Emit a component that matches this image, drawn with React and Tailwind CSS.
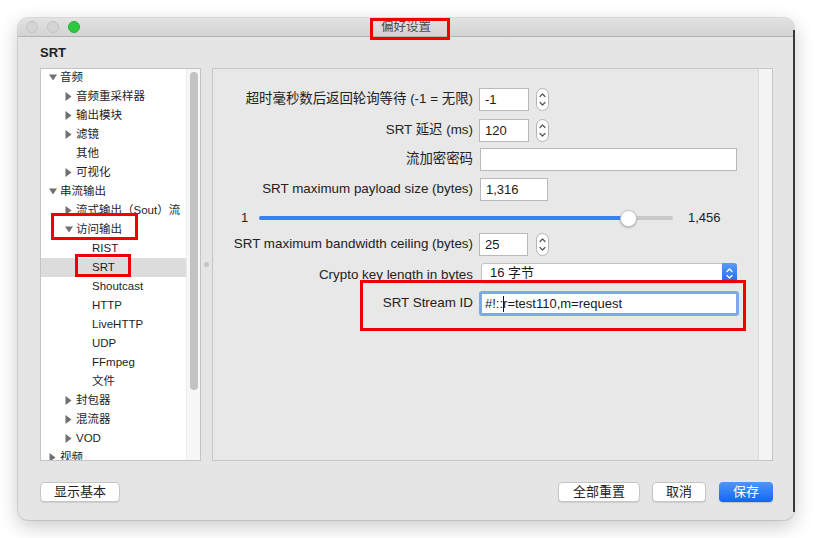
import React from "react";

const Tri = ({ dir }) =>
  dir === "down" ? (
    <svg width="8" height="7" viewBox="0 0 8 7"><path d="M0 0.5 H8 L4 6.5 Z" fill="#707070" /></svg>
  ) : (
    <svg width="7" height="9" viewBox="0 0 7 9"><path d="M0.5 0 V9 L6.5 4.5 Z" fill="#707070" /></svg>
  );

const Stepper = () => (
  <svg width="13" height="23" viewBox="0 0 13 23">
    <rect x="0.5" y="0.5" width="12" height="22" rx="6" fill="#fff" stroke="#b4b4b4" />
    <path d="M4 8.5 L6.5 6 L9 8.5" fill="none" stroke="#555" strokeWidth="1.2" strokeLinecap="round" strokeLinejoin="round" />
    <path d="M4 14.5 L6.5 17 L9 14.5" fill="none" stroke="#555" strokeWidth="1.2" strokeLinecap="round" strokeLinejoin="round" />
  </svg>
);

const tree = [
  [0, "down", "音频"],
  [1, "right", "音频重采样器"],
  [1, "right", "输出模块"],
  [1, "right", "滤镜"],
  [1, null, "其他"],
  [1, "right", "可视化"],
  [0, "down", "串流输出"],
  [1, "right", "流式输出（Sout）流"],
  [1, "down", "访问输出"],
  [2, null, "RIST"],
  [2, null, "SRT", true],
  [2, null, "Shoutcast"],
  [2, null, "HTTP"],
  [2, null, "LiveHTTP"],
  [2, null, "UDP"],
  [2, null, "FFmpeg"],
  [2, null, "文件"],
  [1, "right", "封包器"],
  [1, "right", "混流器"],
  [1, "right", "VOD"],
  [0, "right", "视频"],
];

const indent = ["pl-[8px]", "pl-[24px]", "pl-[40px]"];

const Input = ({ w, children }) => (
  <div className={`${w} h-[23px] border border-[#b9b9b9] bg-white px-[5px] flex items-center text-[13px] text-[#1a1a1a]`}>
    {children}
  </div>
);

const Label = ({ children }) => (
  <div className="w-[260px] shrink-0 text-right text-[13.4px] text-[#222] whitespace-nowrap">{children}</div>
);

export default function App() {
  return (
    <div className="w-[814px] h-[538px] bg-white relative overflow-hidden font-['Liberation_Sans','Noto_Sans_CJK_SC',sans-serif]">
      <div className="ml-[18px] mt-[18px] w-[776px] h-[502px] rounded-[10px] bg-[#e5e5e5] shadow-[0_6px_20px_rgba(0,0,0,0.22),0_0_0_1px_rgba(0,0,0,0.10)] flex flex-col overflow-hidden">
        {/* title bar */}
        <div className="h-[19px] shrink-0 grid grid-cols-[1fr_auto_1fr] items-center bg-gradient-to-b from-[#e2e2e2] to-[#d3d3d3] border-b border-[#b3b3b3]">
          <div className="flex items-center pl-[8px] gap-[9px]">
            <div className="w-[12px] h-[12px] rounded-full bg-[#d4d4d4] border border-[#c2c2c2]" />
            <div className="w-[12px] h-[12px] rounded-full bg-[#d4d4d4] border border-[#c2c2c2]" />
            <div className="w-[12px] h-[12px] rounded-full bg-[#2bc840] border border-[#25b03a]" />
          </div>
          <div className="text-[12.5px] text-[#4a4a4a]">偏好设置</div>
          <div />
        </div>

        {/* body */}
        <div className="flex-1 flex flex-col pl-[22px] pr-[21px]">
          <div className="h-[31px] flex items-center text-[13px] font-bold text-[#222]">SRT</div>

          <div className="h-[393px] flex">
            {/* left tree panel */}
            <div className="w-[161px] border border-[#c4c4c4] bg-white flex overflow-hidden">
              <div className="flex-1 overflow-hidden -mt-[1px]">
                {tree.map(([lvl, tri, text, sel], i) => (
                  <div
                    key={i}
                    className={`h-[19px] flex items-center ${indent[lvl]} ${sel ? "bg-[#dcdcdc]" : ""} text-[11.5px] text-[#1e1e1e] whitespace-nowrap`}
                  >
                    <span className="w-[11px] shrink-0 flex items-center">{tri && <Tri dir={tri} />}</span>
                    <span>{text}</span>
                  </div>
                ))}
              </div>
              <div className="w-[14px] shrink-0 bg-[#f7f7f7] border-l border-[#ececec] pt-[3px] flex justify-center">
                <div className="w-[8px] h-[318px] rounded-full bg-[#c2c2c2]" />
              </div>
            </div>

            {/* splitter */}
            <div className="w-[11px] flex items-center justify-center">
              <div className="w-[5px] h-[5px] rounded-full bg-[#c4c4c4]" />
            </div>

            {/* right panel */}
            <div className="flex-1 border border-[#c6c6c6] bg-[#e8e8e8] flex">
              <div className="flex-1 flex flex-col">
                <div className="mt-[19px] h-[23px] flex items-center">
                  <Label>超时毫秒数后返回轮询等待 (-1 = 无限)</Label>
                  <div className="ml-[6px]"><Input w="w-[50px]">-1</Input></div>
                  <div className="ml-[7px] flex"><Stepper /></div>
                </div>
                <div className="mt-[8px] h-[23px] flex items-center">
                  <Label>SRT 延迟 (ms)</Label>
                  <div className="ml-[6px]"><Input w="w-[50px]">120</Input></div>
                  <div className="ml-[7px] flex"><Stepper /></div>
                </div>
                <div className="mt-[6px] h-[23px] flex items-center">
                  <Label>流加密密码</Label>
                  <div className="ml-[7px]"><Input w="w-[257px]" /></div>
                </div>
                <div className="mt-[7px] h-[23px] flex items-center">
                  <Label>SRT maximum payload size (bytes)</Label>
                  <div className="ml-[7px]"><Input w="w-[68px]">1,316</Input></div>
                </div>
                <div className="mt-[8px] h-[18px] flex items-center pl-[28px] text-[13px] text-[#222]">
                  <span className="w-[8px]">1</span>
                  <div className="ml-[10px] w-[414px] h-[4px] rounded-full bg-[#c9c9c9] flex relative">
                    <div className="w-[369px] h-[4px] rounded-full bg-[#3a7ff5]" />
                    <div className="absolute left-[361px] -top-[6.5px] w-[17px] h-[17px] rounded-full bg-white border border-[#c4c4c4] shadow-[0_1px_2px_rgba(0,0,0,0.25)]" />
                  </div>
                  <span className="ml-[15px]">1,456</span>
                </div>
                <div className="mt-[6px] h-[23px] flex items-center">
                  <Label>SRT maximum bandwidth ceiling (bytes)</Label>
                  <div className="ml-[6px]"><Input w="w-[49px]">25</Input></div>
                  <div className="ml-[8px] flex"><Stepper /></div>
                </div>
                <div className="mt-[7px] h-[20px] flex items-center">
                  <div className="self-end leading-[16px]"><Label>Crypto key length in bytes</Label></div>
                  <div className="ml-[8px] w-[256px] h-[20px] flex bg-white border border-[#c2c2c2] rounded-[3px] shadow-[0_1px_1px_rgba(0,0,0,0.08)]">
                    <div className="flex-1 flex items-center pl-[8px] text-[13px] text-[#1a1a1a]">16 字节</div>
                    <div className="w-[15px] -my-px -mr-px rounded-r-[3px] bg-gradient-to-b from-[#5a9cf8] to-[#1a67ef] flex items-center justify-center">
                      <svg width="9" height="13" viewBox="0 0 9 13">
                        <path d="M2 4.5 L4.5 2 L7 4.5" fill="none" stroke="#fff" strokeWidth="1.3" strokeLinecap="round" strokeLinejoin="round" />
                        <path d="M2 8.5 L4.5 11 L7 8.5" fill="none" stroke="#fff" strokeWidth="1.3" strokeLinecap="round" strokeLinejoin="round" />
                      </svg>
                    </div>
                  </div>
                </div>
                <div className="mt-[8px] h-[25px] flex items-center">
                  <Label>SRT Stream ID</Label>
                  <div className="ml-[6px] w-[260px] h-[25px] rounded-[3px] border-[3px] border-[#7ea8ee] bg-white flex items-center pl-[3px] text-[13px] text-[#1a1a1a] whitespace-nowrap">
                    <span>#!::</span>
                    <span className="w-px h-[16px] bg-[#111] -mr-[1px]" />
                    <span>r=test110,m=request</span>
                  </div>
                </div>
              </div>
              <div className="w-[14px] shrink-0 bg-[#f4f4f4] border-l border-[#dcdcdc]" />
            </div>
          </div>

          {/* footer */}
          <div className="flex-1 flex items-start pt-[21px]">
            <button className="w-[80px] h-[20px] bg-white border border-[#c6c6c6] rounded-[4px] shadow-[0_1px_1px_rgba(0,0,0,0.1)] text-[13px] text-[#222] flex items-center justify-center">显示基本</button>
            <div className="flex-1" />
            <button className="w-[82px] h-[20px] bg-white border border-[#c6c6c6] rounded-[4px] shadow-[0_1px_1px_rgba(0,0,0,0.1)] text-[13px] text-[#222] flex items-center justify-center">全部重置</button>
            <button className="ml-[12px] w-[54px] h-[20px] bg-white border border-[#c6c6c6] rounded-[4px] shadow-[0_1px_1px_rgba(0,0,0,0.1)] text-[13px] text-[#222] flex items-center justify-center">取消</button>
            <button className="ml-[13px] w-[54px] h-[20px] rounded-[4px] bg-gradient-to-b from-[#4d96fb] to-[#1563f3] shadow-[0_1px_1px_rgba(0,0,0,0.15)] text-[13px] text-white flex items-center justify-center">保存</button>
          </div>
        </div>
      </div>

      {/* right edge dark line */}
      <div className="absolute left-[793px] top-[30px] w-[2px] h-[482px] bg-[#3a3a3a]" />

      {/* red annotation boxes */}
      <div className="absolute left-[370px] top-[18px] w-[80px] h-[22px] border-[3px] border-[#f00000]" />
      <div className="absolute left-[51px] top-[213px] w-[87px] h-[27px] border-[3px] border-[#f00000]" />
      <div className="absolute left-[75px] top-[254px] w-[56px] h-[23px] border-[3px] border-[#f00000]" />
      <div className="absolute left-[360px] top-[280px] w-[386px] h-[51px] border-[3px] border-[#f00000]" />
    </div>
  );
}
